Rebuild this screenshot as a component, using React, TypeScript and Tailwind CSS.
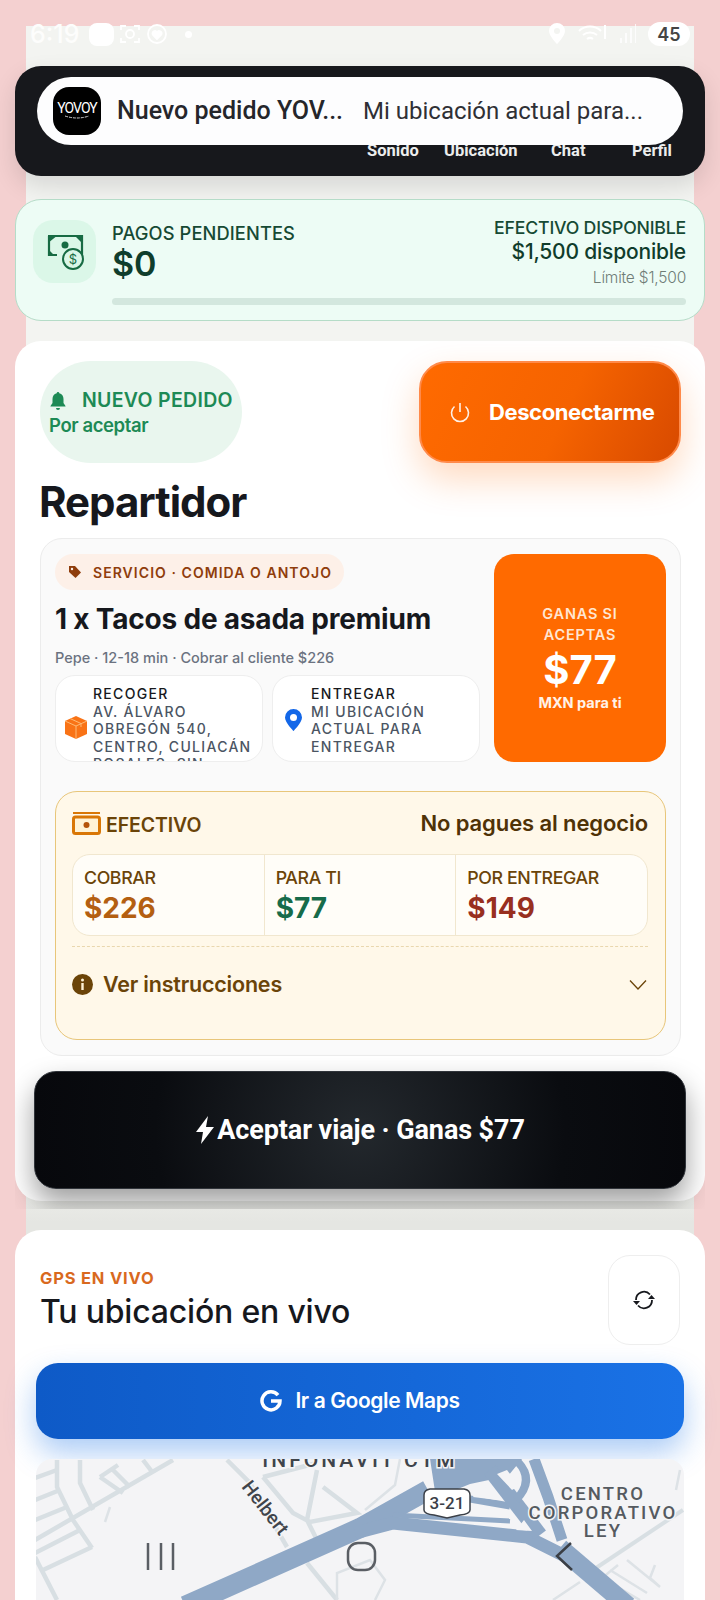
import React from "react";

const F = { fontFamily: "Inter, 'Noto Sans', sans-serif" };
const R = { fontFamily: "Roboto, sans-serif" };

function Map() {
  return (
    <div className="mt-5 h-[141px] rounded-t-2xl overflow-hidden bg-[#f4f4f6]">
      <svg width="648" height="141" viewBox="36 1459 648 141" className="block">
        <g fill="none" stroke="#d8dfe3" strokeWidth="4.5">
          <path d="M35 1540 L173 1460 M35 1478 L57 1470 M35 1500 L60 1490 M35 1520 L67 1507 M35 1553 L80 1530 M43 1570 L92 1547 M73 1520 L92 1548" />
          <path d="M57 1460 L57 1487 L73 1520 M80 1460 L80 1483 L93 1510 M35 1557 L57 1600 M100 1477 L123 1493 M113 1470 L130 1487 M100 1477 L118 1465 M143 1460 L153 1473" />
          <path d="M227 1460 L250 1483 L287 1547 M263 1477 L293 1513 L310 1522 L357 1513 L323 1487 M263 1477 L317 1463 M317 1470 L307 1520 L317 1540" />
          <path d="M307 1563 L337 1600" />
          <path d="M593 1570 L683 1510" strokeWidth="4" />
        </g>
        <g fill="none" stroke="#dde2e6" strokeWidth="2.5">
          <path d="M110 1507 L105 1522 M337 1600 L337 1573 L370 1560 L385 1580 L375 1600 M553 1600 L580 1582" />
          <path d="M610 1570 L647 1593 M627 1560 L660 1587 M618 1565 L602 1578 L640 1600 M660 1587 L650 1578 L655 1565 M680 1470 L676 1490" />
          <path d="M400 1459 L395 1485 L365 1510" />
        </g>
        <path d="M430 1459 L522 1459 L508 1476 L470 1484 L436 1498 Z" fill="#8fa8c6" />
        <g fill="none" stroke="#8fa8c6" strokeLinecap="butt" strokeLinejoin="round">
          <path d="M185 1606 L360 1528 L428 1490" strokeWidth="20" />
          <path d="M355 1533 L393 1523 L527 1537 L567 1557" strokeWidth="13" />
          <path d="M560 1548 L628 1606" strokeWidth="19" />
          <path d="M393 1515 L510 1521" strokeWidth="5" />
          <path d="M470 1499 L510 1506" strokeWidth="7" />
          <path d="M490 1470 L540 1535" strokeWidth="15" />
          <path d="M518 1462 Q535 1480 516 1500" strokeWidth="8" />
          <path d="M534 1459 L548 1497 L562 1540" strokeWidth="11" />
        </g>
        <path d="M473 1497 L481 1482 L497 1500 Z M516 1530 L524 1520 L532 1531 Z M497 1474 L507 1470 L519 1486 L512 1490 Z" fill="#f4f4f6" />
        <path d="M424 1495 Q424 1490 430 1489 L464 1489 Q470 1490 470 1495 L470 1510 Q470 1514 460 1515 L447 1518 L434 1515 Q424 1514 424 1510 Z" fill="#fff" stroke="#3b4048" strokeWidth="1.5" />
        <text x="447" y="1509" textAnchor="middle" fontSize="17" fontWeight="500" fill="#3b4048" style={R}>3-21</text>
        <text x="360" y="1467" textAnchor="middle" fontSize="21" fontWeight="500" letterSpacing="3" fill="#3f444b" stroke="#f4f4f6" strokeWidth="3" paintOrder="stroke" style={R}>INFONAVIT CTM</text>
        <text transform="translate(241 1487) rotate(52)" fontSize="19" fontWeight="500" fill="#3f444b" stroke="#f4f4f6" strokeWidth="3" paintOrder="stroke" style={R}>Helbert</text>
        <g fontSize="18.500" fontWeight="500" letterSpacing="2.200" fill="#555a60" stroke="#f4f4f6" strokeWidth="3" paintOrder="stroke" textAnchor="middle" style={R}>
          <text x="603" y="1500">CENTRO</text>
          <text x="603" y="1519">CORPORATIVO</text>
          <text x="603" y="1537">LEY</text>
        </g>
        <g fill="none" stroke="#5a5e64" strokeWidth="2.5">
          <path d="M148 1543 V1570 M161 1543 V1570 M173 1543 V1570" />
          <rect x="348" y="1543" width="27" height="27" rx="10" />
          <path d="M571 1543 L557 1556 L572 1570" stroke="#3a3e44" />
        </g>
      </svg>
    </div>
  );
}

function Stat({ label, value, color }: { label: string; value: string; color: string }) {
  return (
    <div className="flex-1 pl-[11px] pt-[13px] border-r border-[#f1e7cf] last:border-r-0">
      <div className="text-[17.800px] leading-[20px] font-medium text-[#6b4408] tracking-[-0.4px] whitespace-nowrap">{label}</div>
      <div className={`text-[28px] leading-[33px] font-bold mt-[4px] ${color}`}>{value}</div>
    </div>
  );
}

export default function App() {
  return (
    <div className="w-[720px] h-[1600px] overflow-hidden bg-[#f4d0d0] pt-[26px] px-[26px]" style={F}>
      <div className="h-[1574px] bg-[linear-gradient(#f3f4f1_0%,#f3f4f1_72%,#e5e6e2_76%,#e5e6e2_100%)]">
        {/* status bar */}
        <div className="h-[16px] flex items-start justify-between pl-[4px] text-white">
          <div className="flex items-center gap-[10px] h-[16px]">
            <span className="text-[25px] leading-[16px] font-medium text-[#fdfdfc]">6:19</span>
            <span className="w-[25px] h-[23px] rounded-[8px] bg-white" />
            <svg width="24" height="24" viewBox="0 0 24 24" fill="none" stroke="#fff" strokeWidth="1.8" className="-ml-[6px]">
              <path d="M3 8V4h5M16 4h5v4M21 16v4h-5M8 20H3v-4" />
              <circle cx="12" cy="12" r="4" />
            </svg>
            <svg width="22" height="22" viewBox="0 0 22 22" fill="none" stroke="#fff" strokeWidth="1.8" className="-ml-[6px]">
              <circle cx="11" cy="11" r="9" />
              <path d="M11 16l-4-4a2.5 2.5 0 0 1 4-3 2.5 2.5 0 0 1 4 3z" fill="#fff" />
            </svg>
            <span className="w-[7px] h-[7px] rounded-full bg-white ml-[7px]" />
          </div>
          <div className="flex items-center gap-[11px] h-[16px]">
            <svg width="20" height="24" viewBox="0 0 20 24" fill="#fff"><path d="M10 1a8 8 0 0 0-8 8c0 5 8 13 8 13s8-8 8-13a8 8 0 0 0-8-8zm0 11a3 3 0 1 1 0-6 3 3 0 0 1 0 6z" /></svg>
            <svg width="30" height="22" viewBox="0 0 30 22" fill="none" stroke="#fff" strokeWidth="2"><path d="M1 8a16 16 0 0 1 22 0M5 12a11 11 0 0 1 14 0M9 16a5 5 0 0 1 6 0M27 2v14" /></svg>
            <svg width="18" height="20" viewBox="0 0 18 20" fill="#fff" opacity=".8"><path d="M1 14h2v5H1zM6 9h2v10H6zM11 4h2v15h-2zM16 0h1v19h-1z" /></svg>
            <span className="w-[42px] h-[24px] rounded-[12px] bg-white text-[#444] text-[18px] font-semibold flex items-center justify-center mr-[4px]">45</span>
          </div>
        </div>

        {/* notification */}
        <div className="-mx-[11px] mt-[24px] h-[110px] rounded-[26px] bg-[#17181c] pt-[11px] px-[22px] shadow-[0_10px_24px_rgba(0,0,0,0.12)]">
          <div className="relative z-10 h-[68px] rounded-[34px] bg-[#fdfdfe] flex items-center pl-[16px] whitespace-nowrap" style={R}>
            <div className="w-[48px] h-[48px] rounded-[16px] bg-black text-white flex flex-col items-center justify-center">
              <span className="text-[14px] leading-[13px] tracking-[-1px]">YOVOY</span>
              <svg width="26" height="5" viewBox="0 0 26 5" fill="none" stroke="#fff" strokeWidth="0.8"><path d="M1 1q12 4 24 0" strokeDasharray="3 1" /></svg>
            </div>
            <span className="ml-[16px] text-[25px] font-medium text-[#25262b]">Nuevo pedido YOV...</span>
            <span className="ml-[20px] text-[24px] text-[#2f3035]">Mi ubicación actual para...</span>
          </div>
          <div className="flex justify-end pr-[11px] -mt-[4px] leading-[20px] text-[#eceded] text-[16.5px] font-bold" style={R}>
            <span className="w-[77px]">Sonido</span>
            <span className="w-[107px]">Ubicación</span>
            <span className="w-[81px]">Chat</span>
            <span>Perfil</span>
          </div>
        </div>

        {/* green card */}
        <div className="-mx-[11px] mt-[23px] h-[122px] rounded-[26px] bg-[#edfcf5] border border-[#b5dcc8] pl-[17px] pr-[18px] pt-[20px] flex">
          <div className="w-[63px] h-[63px] rounded-[20px] bg-[#dbf7e8] flex items-center justify-center shrink-0">
            <svg width="38" height="38" viewBox="0 0 38 38" fill="none">
              <path d="M3 3h33v21M3 3v19h8" stroke="#176b43" strokeWidth="2.200" />
              <path d="M2 2h10L2 10zM36 2h-8l8 8zM2 23v-7l7 7z" fill="#176b43" />
              <circle cx="19" cy="12" r="3.500" fill="#176b43" />
              <circle cx="27" cy="26" r="10" fill="#dbf7e8" stroke="#176b43" strokeWidth="2" />
              <text x="27" y="31" textAnchor="middle" fontSize="13" fill="#176b43" style={F}>$</text>
            </svg>
          </div>
          <div className="ml-[16px] flex-1 flex flex-col">
            <div className="flex justify-between">
              <div>
                <div className="text-[18.300px] leading-[20px] font-medium text-[#164a34] mt-[3px] tracking-[0.1px]">PAGOS PENDIENTES</div>
                <div className="text-[34px] leading-[40px] font-semibold text-[#0f3d2c] mt-[1px]">$0</div>
              </div>
              <div className="text-right -mt-[2px]">
                <div className="text-[17.700px] leading-[20px] font-medium text-[#164a34] tracking-[-0.2px]">EFECTIVO DISPONIBLE</div>
                <div className="text-[21px] leading-[26px] font-medium text-[#103c2b] mt-[1px] tracking-[-0.2px]">$1,500 disponible</div>
                <div className="text-[15.500px] leading-[20px] font-light text-[#6f7d77] mt-[3px] tracking-[-0.2px]">Límite $1,500</div>
              </div>
            </div>
            <div className="h-[7px] rounded-full bg-[#d3e7de] mt-[10px]" />
          </div>
        </div>

        {/* main card: the clip keeps the button's shadow from running on below the card */}
        <div className="-mx-[11px] mt-[20px] h-[868px] overflow-hidden">
          <div className="h-[860px] rounded-[26px] bg-white pt-[20px]">
            <div className="flex justify-between pl-[25px] pr-[24px]">
              <div className="w-[202px] h-[102px] rounded-[51px] bg-[#e9f6ee] pl-[9px] pt-[27px]">
                <div className="flex items-center h-[26px]">
                  <svg width="18" height="20" viewBox="0 0 18 20" fill="#1d8a55"><path d="M9 1c-.8 0-1.300.6-1.300 1.300C5 3 3.500 5.200 3.500 8v4L1.500 15v.5h15V15l-2-3V8c0-2.800-1.500-5-4.200-5.700C10.300 1.600 9.800 1 9 1zM7 17a2 2 0 0 0 4 0z" /></svg>
                  <span className="ml-[15px] text-[19.500px] font-semibold tracking-[0.3px] text-[#1d8a55] whitespace-nowrap">NUEVO PEDIDO</span>
                </div>
                <div className="text-[18.500px] leading-[22px] font-semibold text-[#1d8a55] tracking-[-0.4px]">Por aceptar</div>
              </div>
              <div className="w-[262px] h-[102px] rounded-[28px] border-2 border-[#ff8a4a] bg-[linear-gradient(115deg,#ff6a00_0%,#f56300_55%,#d84a00_100%)] shadow-[0_16px_36px_rgba(255,106,0,0.25)] flex items-center pl-[28px]">
                <svg width="22" height="24" viewBox="0 0 22 24" fill="none" stroke="#fff" strokeWidth="1.600" opacity=".9"><path d="M11 3v9M5.500 6.500a8.500 8.500 0 1 0 11 0" /></svg>
                <span className="ml-[18px] text-[22px] font-bold text-white tracking-[-0.4px]">Desconectarme</span>
              </div>
            </div>
            <h1 className="mt-[13px] ml-[24px] text-[42px] leading-[52px] font-bold text-[#16181d] tracking-[-1px]">Repartidor</h1>

            <div className="mt-[10px] ml-[25px] mr-[24px] h-[518px] rounded-[22px] bg-[#fafafa] border border-[#ececec] pt-[15px] px-[14px]">
              <div className="flex h-[209px]">
                <div className="w-[425px] shrink-0">
                  <div className="w-[289px] h-[36px] rounded-full bg-[#fdf0e8] flex items-center pl-[13px]">
                    <svg width="14" height="14" viewBox="0 0 14 14" fill="#8f3d0c"><path d="M1 1h6l6 6.500L7.500 13 1 7z" /><circle cx="4" cy="4" r="1.200" fill="#fdf0e8" /></svg>
                    <span className="ml-[11px] text-[14px] font-semibold text-[#8f3d0c] tracking-[1.050px] whitespace-nowrap">SERVICIO · COMIDA O ANTOJO</span>
                  </div>
                  <div className="mt-[11px] text-[28px] leading-[36px] font-bold text-[#16181d] tracking-[-0.2px] whitespace-nowrap">1 x Tacos de asada premium</div>
                  <div className="mt-[12px] text-[14.500px] leading-[18px] font-medium text-[#6b7280] whitespace-nowrap">Pepe · 12-18 min · Cobrar al cliente $226</div>
                  <div className="mt-[8px] flex gap-[9px]">
                    <div className="w-[208px] h-[87px] rounded-[20px] bg-white border border-[#eeeeee] overflow-hidden flex items-center pl-[8px]">
                      <svg width="24" height="24" viewBox="0 0 24 24" className="shrink-0 mt-[16px]"><path d="M12 1L1 6v13l11 5 11-5V6z" fill="#f97316" /><path d="M1 6l11 5 11-5M12 11v13M6 3.500l11 5V12" stroke="#fdba74" strokeWidth="1" fill="none" /></svg>
                      <div className="ml-[5px] text-[14px] leading-[17.500px] font-medium tracking-[1.300px] self-start pt-[9px] whitespace-nowrap">
                        <div className="text-[#17191d]">RECOGER</div>
                        <div className="text-[#4b5563]">AV. ÁLVARO<br />OBREGÓN 540,<br />CENTRO, CULIACÁN<br />ROSALES, SIN</div>
                      </div>
                    </div>
                    <div className="w-[208px] h-[87px] rounded-[20px] bg-white border border-[#eeeeee] overflow-hidden flex items-center pl-[12px]">
                      <svg width="17" height="22" viewBox="0 0 17 22" className="shrink-0 mt-[2px]"><path d="M8.500 0a8.500 8.500 0 0 0-8.500 8.500c0 5 8.500 13.500 8.500 13.500s8.500-8.500 8.500-13.500A8.500 8.500 0 0 0 8.500 0z" fill="#1367e8" /><circle cx="8.500" cy="8.500" r="3.500" fill="#fff" /></svg>
                      <div className="ml-[9px] text-[14px] leading-[17.500px] font-medium tracking-[1.300px] self-start pt-[9px] whitespace-nowrap">
                        <div className="text-[#17191d]">ENTREGAR</div>
                        <div className="text-[#4b5563]">MI UBICACIÓN<br />ACTUAL PARA<br />ENTREGAR</div>
                      </div>
                    </div>
                  </div>
                </div>
                <div className="ml-[14px] w-[172px] h-[208px] rounded-[20px] bg-[#ff6a00] text-white flex flex-col items-center pt-[49px]">
                  <div className="text-[14.500px] leading-[21px] font-semibold tracking-[0.8px] text-[#ffe6d2] text-center">GANAS SI<br />ACEPTAS</div>
                  <div className="text-[40px] leading-[44px] font-bold mt-[3px]">$77</div>
                  <div className="text-[14.500px] leading-[18px] font-bold mt-[2px] text-[#fff2e8]">MXN para ti</div>
                </div>
              </div>

              <div className="mt-[28px] h-[249px] rounded-[22px] bg-[#fff8e9] border border-[#e8c67a] pl-[16px] pr-[17px]">
                <div className="flex justify-between items-center h-[62px]">
                  <div className="flex items-center pt-[5px]">
                    <svg width="29" height="24" viewBox="0 0 29 24" fill="none" className="-mt-[5px]">
                      <rect x="1" y="1" width="27" height="2" fill="#d97706" />
                      <rect x="1.500" y="6" width="26" height="16.500" rx="2" stroke="#d97706" strokeWidth="3" fill="#fff3d6" />
                      <circle cx="14.500" cy="14" r="3" fill="#b45309" />
                    </svg>
                    <span className="ml-[5px] text-[19.500px] font-semibold text-[#6b4408] tracking-[-0.1px]">EFECTIVO</span>
                  </div>
                  <span className="text-[22px] font-semibold text-[#4f3206] tracking-[-0.1px] mt-[1px]">No pagues al negocio</span>
                </div>
                <div className="h-[82px] rounded-[18px] bg-[#fffdf8] border border-[#f1e7cf] flex">
                  <Stat label="COBRAR" value="$226" color="text-[#b45f11]" />
                  <Stat label="PARA TI" value="$77" color="text-[#176b4a]" />
                  <Stat label="POR ENTREGAR" value="$149" color="text-[#982f1f]" />
                </div>
                <div className="mt-[10px] border-t border-dashed border-[#e9d7ae] h-[76px] flex items-center">
                  <svg width="21" height="21" viewBox="0 0 21 21" className="shrink-0"><circle cx="10.500" cy="10.500" r="10.500" fill="#6b4408" /><rect x="9.300" y="9" width="2.400" height="7" fill="#fff3d6" /><circle cx="10.500" cy="6" r="1.500" fill="#fff3d6" /></svg>
                  <span className="ml-[10px] text-[21.500px] font-semibold text-[#6b4408] tracking-[-0.2px]">Ver instrucciones</span>
                  <svg width="20" height="12" viewBox="0 0 20 12" fill="none" stroke="#6b4408" strokeWidth="1.300" className="ml-auto"><path d="M2 1.500l8 8.500 8-8.500" /></svg>
                </div>
              </div>
            </div>

            <div className="mt-[15px] ml-[19px] mr-[19px] h-[118px] rounded-[22px] border border-[#30343a] bg-[radial-gradient(circle_at_50%_50%,#23282d_0%,#0a0c10_62%,#07080c_100%)] shadow-[0_14px_28px_rgba(0,0,0,0.38)] flex items-center justify-center text-white">
              <svg width="20" height="28" viewBox="0 0 20 28" fill="#fff"><path d="M13 0L1 16h7l-2 12 13-17h-8z" /></svg>
              <span className="ml-[2px] text-[27px] font-bold tracking-[-0.1px]" style={R}>Aceptar viaje · Ganas $77</span>
            </div>
          </div>
        </div>

        {/* gps card */}
        <div className="-mx-[11px] mt-[21px] h-[400px] rounded-t-[26px] bg-white px-[21px] pt-[25px]">
          <div className="flex justify-between">
            <div className="pl-[4px] pt-[13px]">
              <div className="text-[16.500px] leading-[20px] font-bold tracking-[0.8px] text-[#d9691e]">GPS EN VIVO</div>
              <div className="text-[32px] leading-[40px] font-medium text-[#16181d] mt-[4px] tracking-[-0.2px]">Tu ubicación en vivo</div>
            </div>
            <div className="w-[72px] h-[90px] rounded-[22px] border border-[#eeeeee] flex items-center justify-center mr-[4px]">
              <svg width="24" height="24" viewBox="0 0 24 24" fill="none" stroke="#16181d" strokeWidth="1.800">
                <path d="M4 12a8 8 0 0 1 14-5.500M20 12a8 8 0 0 1-14 5.500" />
                <path d="M16 11h7l-3.500-4zM1 13h7l-3.500 4z" fill="#16181d" stroke="none" />
              </svg>
            </div>
          </div>
          <div className="mt-[18px] h-[76px] rounded-[22px] bg-gradient-to-r from-[#0e5ac7] to-[#1a72e6] shadow-[0_14px_30px_rgba(26,114,230,0.36)] flex items-center justify-center text-white">
            <svg width="22" height="22" viewBox="0 0 22 22" fill="none" stroke="#fff" strokeWidth="3.500"><path d="M18 5.200A9 9 0 1 0 20 11H11" /></svg>
            <span className="ml-[13px] text-[21px] font-semibold tracking-[-0.4px]">Ir a Google Maps</span>
          </div>
          <Map />
        </div>
      </div>
    </div>
  );
}
